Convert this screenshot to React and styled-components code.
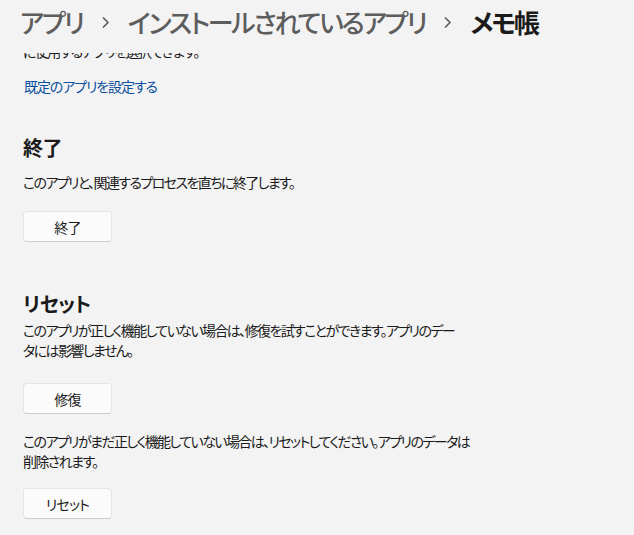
import React from "react";
import styled, { createGlobalStyle } from "styled-components";

const Global = createGlobalStyle`
  html, body { margin: 0; padding: 0; background: #f3f3f3; }
  body {
    font-family: "Noto Sans CJK JP", "Noto Sans", sans-serif;
    font-feature-settings: "palt";
    color: #1a1a1a;
    overflow: hidden;
  }
`;

const Page = styled.div`
  position: relative;
  width: 634px;
  height: 535px;
  overflow: hidden;
  background: #f3f3f3;
`;

const Header = styled.header`
  position: absolute;
  top: 0;
  left: 0;
  right: 0;
  height: 53px;
  z-index: 2;
  background: #f3f3f3;
  display: flex;
  align-items: flex-start;
  padding: 2px 0 0 20px;
  box-sizing: border-box;
`;

const Crumb = styled.span`
  font-size: 26px;
  line-height: 40px;
  font-weight: ${(p) => (p.$current ? 700 : 500)};
  color: ${(p) => (p.$current ? "#1a1a1a" : "#5d5d5d")};
  letter-spacing: -2.2px;
  white-space: nowrap;
`;

const Sep = styled.span`
  display: flex;
  align-items: center;
  height: 40px;
  padding: 0 18px 0 19px;
  color: #5d5d5d;
`;

const Content = styled.main`
  display: flex;
  flex-direction: column;
  align-items: flex-start;
  padding: 41px 0 0 23px;
`;

const Text = styled.p`
  margin: ${(p) => p.$mt || 0}px 0 0 0;
  font-size: 14px;
  line-height: 20px;
  letter-spacing: -1.6px;
  color: #1a1a1a;
`;

const Link = styled.a`
  margin: 15px 0 0 1px;
  font-size: 14px;
  line-height: 20px;
  letter-spacing: -1.1px;
  color: #0b4f9e;
  text-decoration: none;
  cursor: pointer;
`;

const Heading = styled.h2`
  margin: ${(p) => p.$mt}px 0 0 0;
  font-size: 20px;
  line-height: 28px;
  font-weight: 700;
  letter-spacing: -0.6px;
  color: #1a1a1a;
`;

const Button = styled.button`
  margin-top: ${(p) => p.$mt}px;
  width: 89px;
  height: 31px;
  box-sizing: border-box;
  background: #fbfbfb;
  border: 1px solid #e5e5e5;
  border-bottom-color: #cccccc;
  border-radius: 4px;
  font-family: inherit;
  font-feature-settings: "palt";
  font-size: 14px;
  letter-spacing: -0.8px;
  color: #1a1a1a;
  padding: 0;
  cursor: pointer;
`;

const Chevron = () => (
  <svg width="8" height="11" viewBox="0 0 8 11" fill="none">
    <path d="M1.5 1 L6 5.5 L1.5 10" stroke="#5d5d5d" strokeWidth="1.7" strokeLinecap="round" strokeLinejoin="round" />
  </svg>
);

export default function App() {
  return (
    <Page>
      <Global />
      <Header>
        <Crumb>アプリ</Crumb>
        <Sep><Chevron /></Sep>
        <Crumb>インストールされているアプリ</Crumb>
        <Sep><Chevron /></Sep>
        <Crumb $current>メモ帳</Crumb>
      </Header>
      <Content>
        <Text>に使用するアプリを選択できます。</Text>
        <Link>既定のアプリを設定する</Link>

        <Heading $mt={38}>終了</Heading>
        <Text $mt={10}>このアプリと、関連するプロセスを直ちに終了します。</Text>
        <Button $mt={19}>終了</Button>

        <Heading $mt={48}>リセット</Heading>
        <Text $mt={2}>
          このアプリが正しく機能していない場合は、修復を試すことができます。アプリのデー
          <br />
          タには影響しません。
        </Text>
        <Button $mt={23}>修復</Button>
        <Text $mt={17}>
          このアプリがまだ正しく機能していない場合は、リセットしてください。アプリのデータは
          <br />
          削除されます。
        </Text>
        <Button $mt={17}>リセット</Button>
      </Content>
    </Page>
  );
}
